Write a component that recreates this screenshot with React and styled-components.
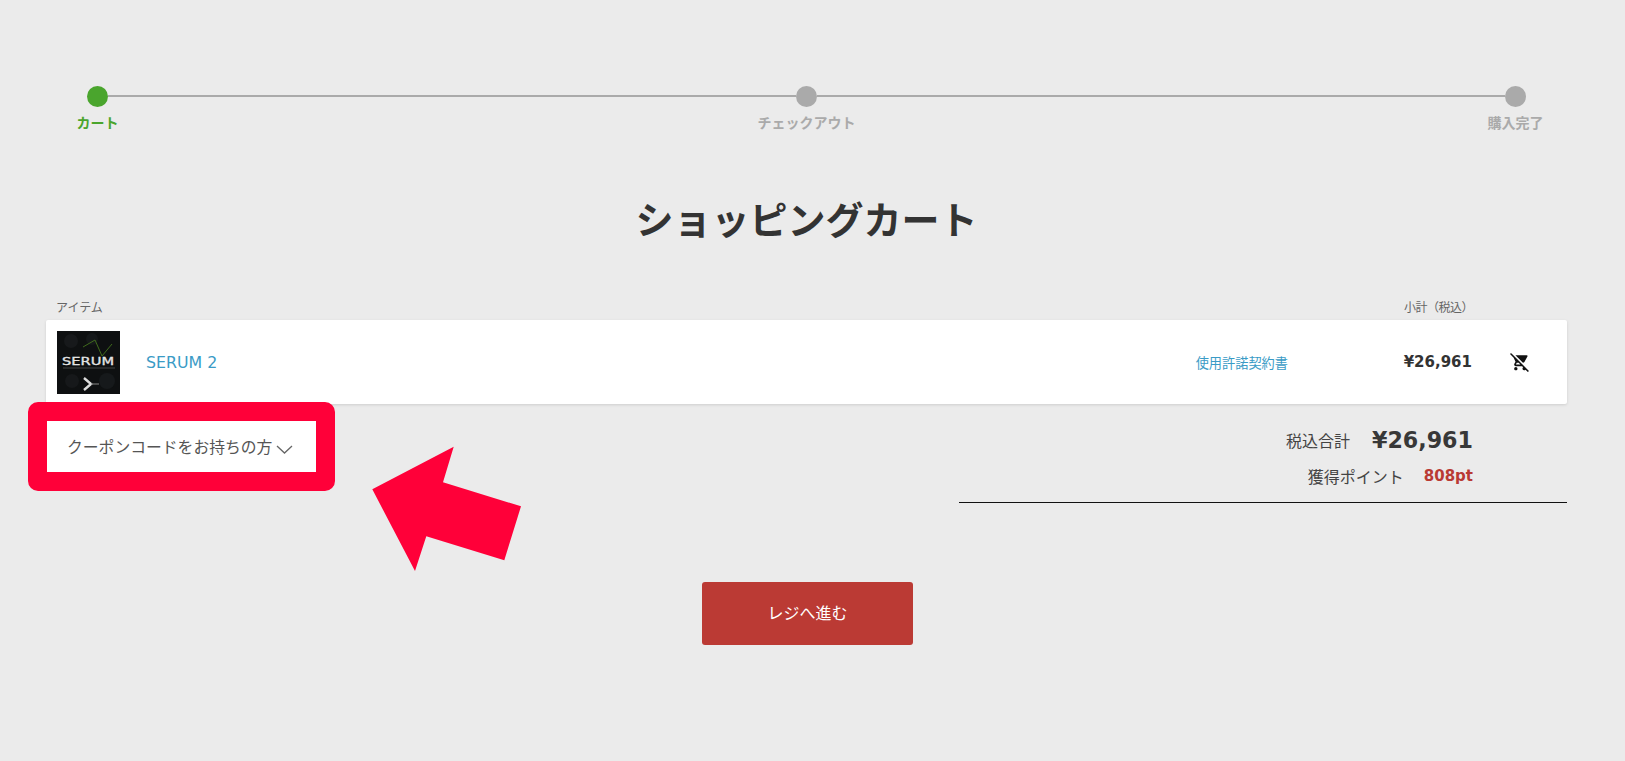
import styled, { createGlobalStyle } from 'styled-components';
import { MdRemoveShoppingCart } from 'react-icons/md';

const GlobalStyle = createGlobalStyle`
   html, body {
      margin: 0;
      padding: 0;
      background: #ebebeb;
   }
   body {
      font-family: "DejaVu Sans", "Noto Sans CJK JP", sans-serif;
      color: #333;
   }
   * {
      box-sizing: border-box;
   }
`;

const steps = [
   { label: 'カート', active: true },
   { label: 'チェックアウト' },
   { label: '購入完了' },
];

function Stepper() {
   return (
      <StepperRow>
         {steps.map((step, i) => (
            <StepGroup key={step.label} $last={i === steps.length - 1}>
               <Step>
                  <Dot $active={step.active} />
                  <StepLabel $active={step.active}>{step.label}</StepLabel>
               </Step>
               {i < steps.length - 1 && <Rail />}
            </StepGroup>
         ))}
      </StepperRow>
   );
}

function SerumThumb() {
   return (
      <Thumb viewBox="0 0 63 63">
         <rect width="63" height="63" fill="#0e1011" />
         <circle cx="14" cy="10" r="7" fill="#17191b" />
         <circle cx="35" cy="8" r="6" fill="#15181a" />
         <circle cx="15" cy="50" r="7" fill="#16181a" />
         <circle cx="50" cy="50" r="8" fill="#16191b" />
         <polyline points="26,16 38,9 45,25 55,13" fill="none" stroke="#3f6a1c" strokeWidth="1" />
         <text x="31" y="34" textAnchor="middle" fontFamily="'DejaVu Sans', sans-serif" fontWeight="400" fontSize="10" fill="#e4e4e4" stroke="#e4e4e4" strokeWidth="0.3" textLength="52" lengthAdjust="spacingAndGlyphs">SERUM</text>
         <line x1="6" y1="37" x2="58" y2="37" stroke="#666" strokeWidth="0.6" />
         <polyline points="27,47 34,53 27,59" fill="none" stroke="#ddd" strokeWidth="2.4" />
         <line x1="34" y1="53" x2="42" y2="53" stroke="#888" strokeWidth="1" />
      </Thumb>
   );
}

function App() {
   return (
      <Page>
         <GlobalStyle />
         <Stepper />
         <Title>ショッピングカート</Title>

         <ListHeader>
            <span>アイテム</span>
            <SubtotalHead>小計（税込）</SubtotalHead>
         </ListHeader>

         <ItemCard>
            <SerumThumb />
            <ItemName>SERUM 2</ItemName>
            <License>使用許諾契約書</License>
            <ItemPrice>¥26,961</ItemPrice>
            <RemoveIcon>
               <MdRemoveShoppingCart size={20} color="#111" />
            </RemoveIcon>
         </ItemCard>

         <SummaryRow>
            <CouponButton>
               クーポンコードをお持ちの方
               <svg width="17" height="9" viewBox="0 0 17 9" fill="none">
                  <polyline points="1,1 8.5,8 16,1" stroke="#666" strokeWidth="1.3" />
               </svg>
            </CouponButton>
            <Totals>
               <TotalLine>
                  <TotalLabel>税込合計</TotalLabel>
                  <TotalAmount>¥26,961</TotalAmount>
               </TotalLine>
               <PointsLine>
                  <PointsLabel>獲得ポイント</PointsLabel>
                  <PointsValue>808pt</PointsValue>
               </PointsLine>
            </Totals>
         </SummaryRow>

         <CheckoutRow>
            <CheckoutButton>レジへ進む</CheckoutButton>
         </CheckoutRow>

         <Arrow viewBox="0 0 150 126">
            <polygon points="81.7,0.7 71,36.3 149,60.3 132.3,114.3 54.3,90.3 43,125 0.3,43.3" fill="#ff0039" />
         </Arrow>
      </Page>
   );
}

export default App;

const Page = styled.div`
   position: relative;
   height: 761px;
   overflow: hidden;
   padding: 86px 58px 0 46px;
`;

const StepperRow = styled.div`
   display: flex;
   margin: 0 41px 0 41px;
`;

const StepGroup = styled.div`
   display: flex;
   align-items: flex-start;
   flex: ${(p) => (p.$last ? '0 0 auto' : '1 1 0')};
`;

const Step = styled.div`
   display: flex;
   flex-direction: column;
   align-items: center;
   width: 21px;
`;

const Dot = styled.div`
   width: 21px;
   height: 21px;
   border-radius: 50%;
   background: ${(p) => (p.$active ? '#4aa52d' : '#aaa')};
`;

const StepLabel = styled.div`
   margin-top: 6px;
   font-size: 14px;
   line-height: 20px;
   font-weight: 700;
   white-space: nowrap;
   color: ${(p) => (p.$active ? '#4aa52d' : '#aaa')};
`;

const Rail = styled.div`
   flex: 1;
   height: 2px;
   margin-top: 9px;
   background: #aaa;
`;

const Title = styled.h1`
   margin: 60px 0 0;
   font-size: 38px;
   line-height: 56px;
   font-weight: 700;
   text-align: center;
   color: #333;
`;

const ListHeader = styled.div`
   display: flex;
   justify-content: space-between;
   margin-top: 50px;
   padding: 0 94px 0 10px;
   font-size: 12px;
   line-height: 18px;
   color: #666;
`;

const SubtotalHead = styled.span`
   letter-spacing: -0.5px;
`;

const ItemCard = styled.div`
   display: flex;
   align-items: center;
   height: 84px;
   margin-top: 3px;
   padding: 0 37px 0 11px;
   background: #fff;
   border-radius: 2px;
   box-shadow: 0 1px 3px rgba(0, 0, 0, 0.12);
`;

const Thumb = styled.svg`
   width: 63px;
   height: 63px;
   flex: none;
`;

const ItemName = styled.a`
   flex: 1;
   margin-left: 26px;
   font-size: 15.8px;
   color: #3a9bc6;
`;

const License = styled.a`
   font-size: 13.2px;
   color: #3a9bc6;
`;

const ItemPrice = styled.div`
   width: 184px;
   text-align: right;
   font-size: 15px;
   font-weight: 700;
   color: #333;
`;

const RemoveIcon = styled.div`
   display: flex;
   margin-left: 38px;
`;

const SummaryRow = styled.div`
   display: flex;
   justify-content: space-between;
   align-items: flex-start;
   margin-top: 17px;
`;

const CouponButton = styled.button`
   position: relative;
   display: flex;
   align-items: center;
   gap: 4px;
   width: 269px;
   height: 51px;
   margin-left: 1px;
   padding: 0 0 0 20px;
   border: none;
   background: #fff;
   font-family: inherit;
   font-size: 15.8px;
   color: #555;
   white-space: nowrap;

   & svg {
      margin-top: 6px;
      flex: none;
   }

   /* red annotation frame drawn over the screenshot */
   &::after {
      content: '';
      position: absolute;
      inset: -19px;
      border: 19px solid #ff0039;
      border-radius: 10px;
   }
`;

const Totals = styled.div`
   display: flex;
   flex-direction: column;
   align-items: flex-end;
   width: 608px;
   height: 82px;
   padding-right: 94px;
   border-bottom: 1px solid #111;
`;

const TotalLine = styled.div`
   display: flex;
   align-items: center;
   gap: 22px;
   height: 38px;
`;

const TotalLabel = styled.span`
   font-size: 16px;
   color: #444;
`;

const TotalAmount = styled.span`
   font-size: 22.2px;
   font-weight: 700;
   color: #383838;
`;

const PointsLine = styled.div`
   display: flex;
   align-items: center;
   gap: 20px;
   height: 34px;
`;

const PointsLabel = styled.span`
   font-size: 16px;
   color: #444;
`;

const PointsValue = styled.span`
   font-size: 15px;
   font-weight: 700;
   color: #b93a34;
`;

const CheckoutRow = styled.div`
   display: flex;
   justify-content: center;
   margin-top: 79px;
   padding-left: 2px;
`;

const CheckoutButton = styled.button`
   width: 211px;
   height: 63px;
   padding: 0 0 3px;
   border: none;
   border-radius: 3px;
   background: #bb3a34;
   font-family: inherit;
   font-size: 16px;
   color: #fff;
`;

const Arrow = styled.svg`
   position: absolute;
   left: 372px;
   top: 446px;
   width: 150px;
   height: 126px;
`;
